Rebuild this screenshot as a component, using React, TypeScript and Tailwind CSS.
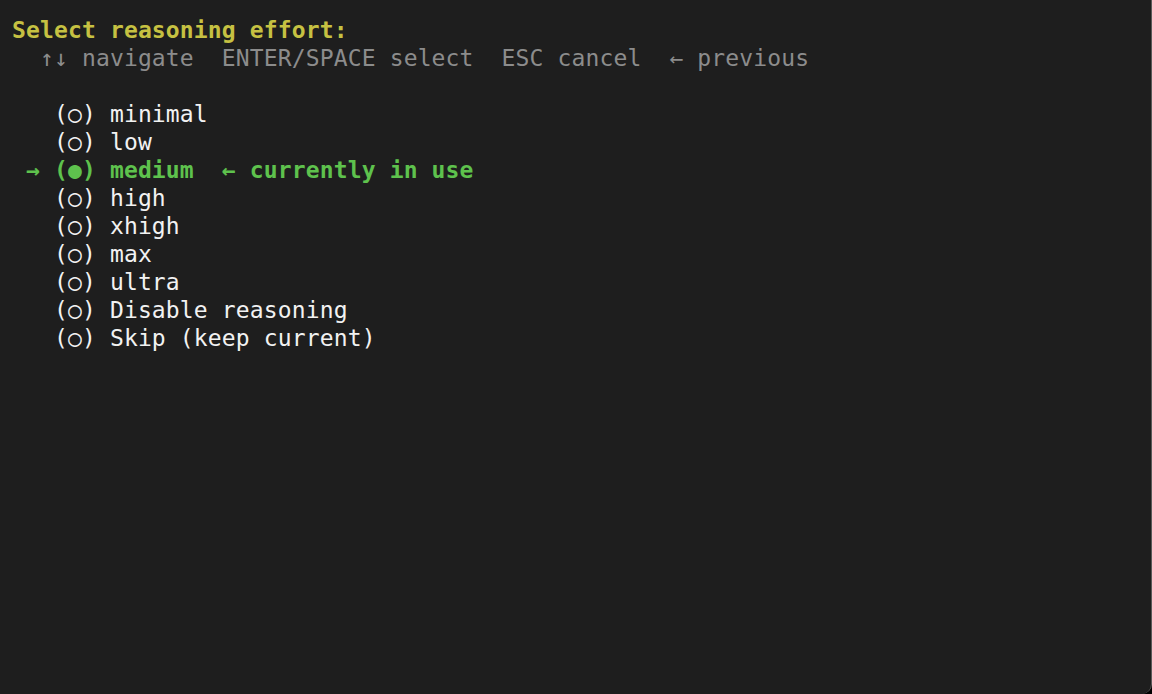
const options = [
  "minimal",
  "low",
  "medium",
  "high",
  "xhigh",
  "max",
  "ultra",
  "Disable reasoning",
  "Skip (keep current)",
];

const current = "medium";

export default function App() {
  return (
    <div className="h-[694px] w-[1152px] bg-black">
      <div className="h-full w-full rounded-br-[10px] border-r border-[#5a5a5a] bg-[#1e1e1e] pl-[12px] pt-[16px] font-['DejaVu_Sans_Mono',monospace] text-[23px] leading-[28px] tracking-[0.14px] whitespace-pre">
        <div className="font-bold text-[#c6c142]">Select reasoning effort:</div>
        <div className="text-[#8c8c8c]">  ↑↓ navigate  ENTER/SPACE select  ESC cancel  ← previous</div>
        <div> </div>
        {options.map((opt) =>
          opt === current ? (
            <div key={opt} className="font-bold text-[#5ec24d]">
              {" → (●) " + opt + "  ← currently in use"}
            </div>
          ) : (
            <div key={opt} className="text-[#f2f2f2]">
              {"   (○) " + opt}
            </div>
          )
        )}
      </div>
    </div>
  );
}
